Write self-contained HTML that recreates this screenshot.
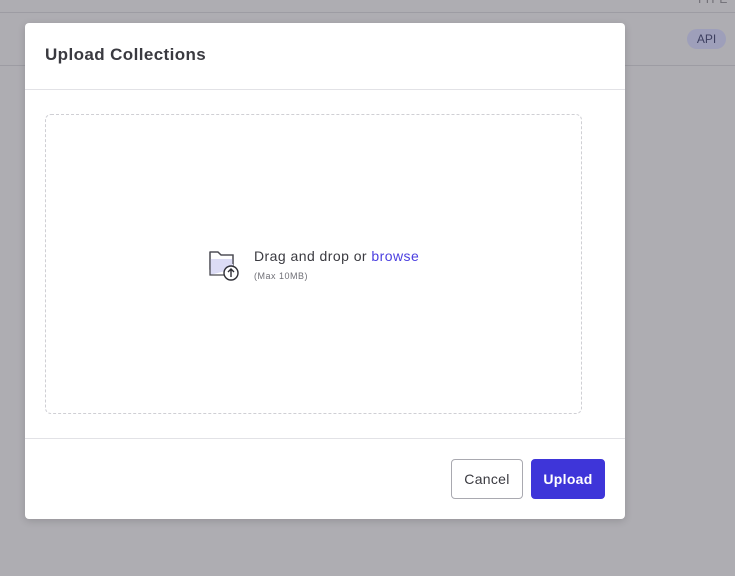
<!DOCTYPE html>
<html><head><style>
*{box-sizing:border-box;margin:0;padding:0}
body{width:735px;height:576px;background:#aeadb2;font-family:"Liberation Sans",sans-serif;position:relative;overflow:hidden}
.l1{position:absolute;left:0;right:0;top:12px;border-top:1px solid #9d9ca3}
.l2{position:absolute;left:0;right:0;top:65px;border-top:1px solid #9d9ca3}
.typ{position:absolute;left:696px;top:-8px;font-size:12px;color:#6f6e75}
.api{position:absolute;left:687px;top:29px;width:39px;height:20px;border-radius:10px;background:#9e9fba;color:#3d3f60;font-size:12px;text-align:center;line-height:20px}
.modal{position:absolute;left:25px;top:23px;width:600px;height:496px;background:#fff;border-radius:4px;box-shadow:0 2px 8px rgba(0,0,0,.15)}
.h{height:67px;border-bottom:1px solid #e2e2e6;padding:22px 20px;font-size:17px;font-weight:bold;color:#3a3a40;letter-spacing:.4px}
.drop{position:absolute;left:20px;top:91px;width:537px;height:300px;border:1px dashed #cfcfd4;border-radius:6px}
.ft{position:absolute;left:0;right:0;top:415px;border-top:1px solid #e2e2e6}
.btn{position:absolute;top:436px;height:40px;border-radius:4px;font-size:14px;line-height:38px;text-align:center;letter-spacing:.3px}
</style></head><body>
<div class="typ">TYPE</div><div class="l1"></div><div class="api">API</div><div class="l2"></div>
<div class="modal">
<div class="h">Upload Collections</div>
<div class="drop">
<svg style="position:absolute;left:162px;top:133px" width="34" height="34" viewBox="0 0 34 34">
<path d="M2 4h8l3 3h12v14H2z" fill="#fff" stroke="#4a4a52" stroke-width="1.3"/>
<path d="M2 27V11h23v10" fill="#dcdcf5" stroke="none"/>
<path d="M2 4h8l3 3h12v9M2 4v23h14" fill="none" stroke="#4a4a52" stroke-width="1.3"/>
<circle cx="23" cy="25" r="7" fill="#fff" stroke="#2e2e35" stroke-width="1.4"/>
<path d="M23 29v-8M20 24l3-3 3 3" fill="none" stroke="#2e2e35" stroke-width="1.4"/>
</svg>
<div style="position:absolute;left:208px;top:133px;font-size:14px;color:#3a3a40;letter-spacing:.45px">Drag and drop or <span style="color:#4b3fe0">browse</span></div>
<div style="position:absolute;left:208px;top:156px;font-size:9px;color:#6f6f76;letter-spacing:.5px">(Max 10MB)</div>
</div>
<div class="ft"></div>
<div class="btn" style="left:426px;width:72px;border:1px solid #a9a9b0;color:#3a3a40">Cancel</div>
<div class="btn" style="left:506px;width:74px;background:#3e35d9;color:#fff;font-weight:bold;border:1px solid #3e35d9">Upload</div>
</div>
</body></html>
